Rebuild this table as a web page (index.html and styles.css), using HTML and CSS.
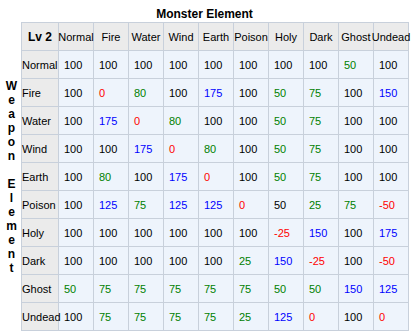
FILE: index.html
```html
<!DOCTYPE html>
<html>
<head>
<meta charset="utf-8">
<link rel="stylesheet" href="styles.css">
</head>
<body>
<div class="page">
  <div class="title">Monster Element</div>
  <div class="side">W<br>e<br>a<br>p<br>o<br>n<br><br>E<br>l<br>e<br>m<br>e<br>n<br>t</div>
  <div class="grid">
    <div class="h lv">Lv 2</div>
    <div class="h"><span>Normal</span></div>
    <div class="h"><span>Fire</span></div>
    <div class="h"><span>Water</span></div>
    <div class="h"><span>Wind</span></div>
    <div class="h"><span>Earth</span></div>
    <div class="h"><span>Poison</span></div>
    <div class="h"><span>Holy</span></div>
    <div class="h"><span>Dark</span></div>
    <div class="h"><span>Ghost</span></div>
    <div class="h"><span>Undead</span></div>

    <div class="r">Normal</div>
    <div class="d">100</div><div class="d">100</div><div class="d">100</div><div class="d">100</div><div class="d">100</div><div class="d">100</div><div class="d">100</div><div class="d">100</div><div class="d g">50</div><div class="d">100</div>

    <div class="r">Fire</div>
    <div class="d">100</div><div class="d x">0</div><div class="d g">80</div><div class="d">100</div><div class="d b">175</div><div class="d">100</div><div class="d g">50</div><div class="d g">75</div><div class="d">100</div><div class="d b">150</div>

    <div class="r">Water</div>
    <div class="d">100</div><div class="d b">175</div><div class="d x">0</div><div class="d g">80</div><div class="d">100</div><div class="d">100</div><div class="d g">50</div><div class="d g">75</div><div class="d">100</div><div class="d">100</div>

    <div class="r">Wind</div>
    <div class="d">100</div><div class="d">100</div><div class="d b">175</div><div class="d x">0</div><div class="d g">80</div><div class="d">100</div><div class="d g">50</div><div class="d g">75</div><div class="d">100</div><div class="d">100</div>

    <div class="r">Earth</div>
    <div class="d">100</div><div class="d g">80</div><div class="d">100</div><div class="d b">175</div><div class="d x">0</div><div class="d">100</div><div class="d g">50</div><div class="d g">75</div><div class="d">100</div><div class="d">100</div>

    <div class="r">Poison</div>
    <div class="d">100</div><div class="d b">125</div><div class="d g">75</div><div class="d b">125</div><div class="d b">125</div><div class="d x">0</div><div class="d">50</div><div class="d g">25</div><div class="d g">75</div><div class="d x">-50</div>

    <div class="r">Holy</div>
    <div class="d">100</div><div class="d">100</div><div class="d">100</div><div class="d">100</div><div class="d">100</div><div class="d">100</div><div class="d x">-25</div><div class="d b">150</div><div class="d">100</div><div class="d b">175</div>

    <div class="r">Dark</div>
    <div class="d">100</div><div class="d">100</div><div class="d">100</div><div class="d">100</div><div class="d">100</div><div class="d g">25</div><div class="d b">150</div><div class="d x">-25</div><div class="d">100</div><div class="d x">-50</div>

    <div class="r">Ghost</div>
    <div class="d g">50</div><div class="d g">75</div><div class="d g">75</div><div class="d g">75</div><div class="d g">75</div><div class="d g">75</div><div class="d g">50</div><div class="d g">50</div><div class="d b">150</div><div class="d b">125</div>

    <div class="r">Undead</div>
    <div class="d">100</div><div class="d g">75</div><div class="d g">75</div><div class="d g">75</div><div class="d g">75</div><div class="d g">25</div><div class="d b">125</div><div class="d x">0</div><div class="d">100</div><div class="d x">0</div>
  </div>
</div>
</body>
</html>
```
FILE: styles.css
```css
html, body {
  margin: 0;
  padding: 0;
  background: #ffffff;
}

body {
  font-family: "Liberation Sans", Arial, sans-serif;
  font-size: 11px;
  color: #000000;
}

.page {
  display: grid;
  grid-template-columns: 21px auto;
  grid-template-rows: 22px auto;
  width: 409px;
}

.title {
  grid-column: 1 / span 2;
  text-align: center;
  font-weight: bold;
  font-size: 12px;
  line-height: 14px;
  padding-top: 7px;
  box-sizing: border-box;
  height: 22px;
}

.side {
  display: flex;
  flex-direction: column;
  justify-content: center;
  text-align: center;
  padding-left: 2px;
  font-weight: bold;
  font-size: 12px;
  line-height: 14px;
}

.grid {
  display: grid;
  grid-template-columns: 36px repeat(10, 34px);
  grid-auto-rows: 27px;
  gap: 1px;
  background: #c8d0db;
  border: 1px solid #c8d0db;
  width: max-content;
}

.h, .r, .d {
  display: flex;
  align-items: center;
  white-space: nowrap;
  min-width: 0;
}

.h {
  background: #ebebeb;
  justify-content: center;
}

.h span {
  position: relative;
}

.lv {
  font-weight: bold;
  font-size: 12px;
}

.r {
  background: #ebebeb;
  padding-left: 0;
  position: relative;
  z-index: 1;
  background-clip: padding-box;
}

.d {
  background: #eef4fc;
  padding-left: 5px;
}

.g { color: #008000; }
.b { color: #0000ff; }
.x { color: #ff0000; }
```
